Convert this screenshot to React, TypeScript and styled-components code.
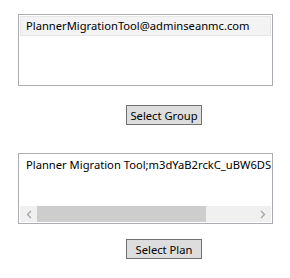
import React from "react";
import styled, { createGlobalStyle } from "styled-components";

const GlobalStyle = createGlobalStyle`
  body {
    margin: 0;
    background: #ffffff;
    font-family: "Noto Sans", "Open Sans", sans-serif;
  }
`;

function App() {
  return (
    <>
      <GlobalStyle />
      <Page>
        <ListBox height={72}>
          <SelectedItem>PlannerMigrationTool@adminseanmc.com</SelectedItem>
        </ListBox>
        <ButtonRow top={19}>
          <Button>Select Group</Button>
        </ButtonRow>
        <ListBox height={71} style={{ marginTop: 28 }}>
          <Viewport>
            <PlainItem>Planner Migration Tool;m3dYaB2rckC_uBW6DS</PlainItem>
          </Viewport>
          <ScrollBar>
            <Arrow>
              <svg width="6" height="9" viewBox="0 0 6 9">
                <path d="M5 1 L1.5 4.5 L5 8" fill="none" stroke="#a3a3a3" strokeWidth="1.3" />
              </svg>
            </Arrow>
            <Track>
              <Thumb />
            </Track>
            <Arrow>
              <svg width="6" height="9" viewBox="0 0 6 9">
                <path d="M1 1 L4.5 4.5 L1 8" fill="none" stroke="#a3a3a3" strokeWidth="1.3" />
              </svg>
            </Arrow>
          </ScrollBar>
        </ListBox>
        <ButtonRow top={15}>
          <Button>Select Plan</Button>
        </ButtonRow>
      </Page>
    </>
  );
}

const Page = styled.div`
  padding: 14px 0 0 18px;
  display: flex;
  flex-direction: column;
`;

const ListBox = styled.div<{ height: number }>`
  width: 255px;
  height: ${(p) => p.height}px;
  box-sizing: border-box;
  border: 1px solid #abadb3;
  padding: 1px;
  display: flex;
  flex-direction: column;
  background: #ffffff;
`;

const SelectedItem = styled.div`
  height: 20px;
  box-sizing: border-box;
  border: 1px solid #e6e6e6;
  background: #f3f3f3;
  padding-left: 5px;
  font-size: 11.2px;
  line-height: 18px;
  color: #000000;
  white-space: nowrap;
  overflow: hidden;
`;

const Viewport = styled.div`
  flex: 1;
  overflow: hidden;
`;

const PlainItem = styled.div`
  height: 20px;
  padding-left: 6px;
  font-size: 11.2px;
  line-height: 20px;
  color: #000000;
  white-space: nowrap;
`;

const ScrollBar = styled.div`
  height: 16px;
  display: flex;
  background: #f0f0f0;
`;

const Arrow = styled.div`
  width: 17px;
  display: flex;
  align-items: center;
  justify-content: center;
`;

const Track = styled.div`
  flex: 1;
  display: flex;
`;

const Thumb = styled.div`
  width: 169px;
  background: #cdcdcd;
`;

const ButtonRow = styled.div<{ top: number }>`
  margin-top: ${(p) => p.top}px;
  padding-left: 108px;
  display: flex;
`;

const Button = styled.button`
  width: 76px;
  height: 20px;
  box-sizing: border-box;
  border: 1px solid #707070;
  background: #dddddd;
  border-radius: 0;
  padding: 0;
  font-family: "Noto Sans", "Open Sans", sans-serif;
  font-size: 11.2px;
  line-height: 17px;
  color: #000000;
`;

export default App;
